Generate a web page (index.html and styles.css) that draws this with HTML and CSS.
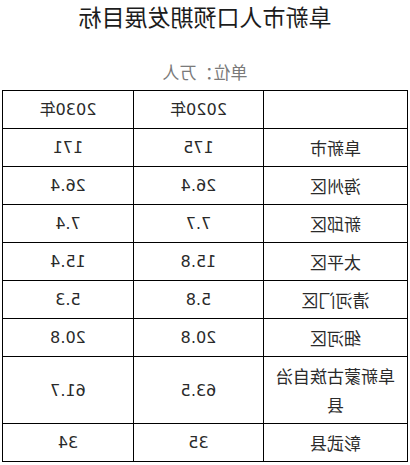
FILE: index.html
```html
<!DOCTYPE html>
<html lang="zh-CN">
<head>
<meta charset="utf-8">
<title>阜新市人口预期发展目标</title>
<link rel="stylesheet" href="styles.css">
</head>
<body>
<div class="page">
  <h1 class="title">阜新市人口预期发展目标</h1>
  <p class="unit">单位：万人</p>
  <table class="data">
    <colgroup>
      <col class="c-name">
      <col class="c-a">
      <col class="c-b">
    </colgroup>
    <thead>
      <tr><th class="name"></th><th class="num">2020年</th><th class="num">2030年</th></tr>
    </thead>
    <tbody>
      <tr><td class="name">阜新市</td><td class="num">175</td><td class="num">171</td></tr>
      <tr><td class="name">海州区</td><td class="num">26.4</td><td class="num">26.4</td></tr>
      <tr><td class="name">新邱区</td><td class="num">7.7</td><td class="num">7.4</td></tr>
      <tr><td class="name">太平区</td><td class="num">15.8</td><td class="num">15.4</td></tr>
      <tr><td class="name">清河门区</td><td class="num">5.8</td><td class="num">5.3</td></tr>
      <tr><td class="name">细河区</td><td class="num">20.8</td><td class="num">20.8</td></tr>
      <tr><td class="name">阜新蒙古族自治县</td><td class="num">63.5</td><td class="num">61.7</td></tr>
      <tr><td class="name">彰武县</td><td class="num">35</td><td class="num">34</td></tr>
    </tbody>
  </table>
</div>
</body>
</html>
```

FILE: styles.css
```css
html, body {
  margin: 0;
  padding: 0;
  background: #ffffff;
}

.page {
  width: 410px;
  height: 465px;
  overflow: hidden;
  transform: scaleX(-1);
  font-family: "Noto Sans CJK SC", sans-serif;
}

.title {
  margin: 0;
  font-size: 23px;
  line-height: 33px;
  font-weight: normal;
  color: #1c1c1c;
  text-align: center;
}

.unit {
  margin: 27px 0 6px;
  font-size: 17px;
  line-height: 24px;
  color: #7a7a7a;
  text-align: center;
}

.data {
  margin-left: 2px;
  width: 406px;
  table-layout: fixed;
  border-collapse: separate;
  border-spacing: 0;
  border-left: 1px solid #000;
  border-top: 1px solid #000;
}

.c-name { width: 144px; }
.c-a { width: 130px; }
.c-b { width: 131px; }

.data th,
.data td {
  border-right: 1px solid #000;
  border-bottom: 1px solid #000;
  padding: 4px 8px;
  line-height: 29px;
  font-weight: normal;
  text-align: center;
  color: #2a2a2a;
}

.data .name {
  font-size: 17px;
  font-family: "Noto Sans CJK SC", sans-serif;
}

.data .num {
  font-size: 16px;
  font-family: "DejaVu Sans", "Noto Sans CJK SC", sans-serif;
}
```
